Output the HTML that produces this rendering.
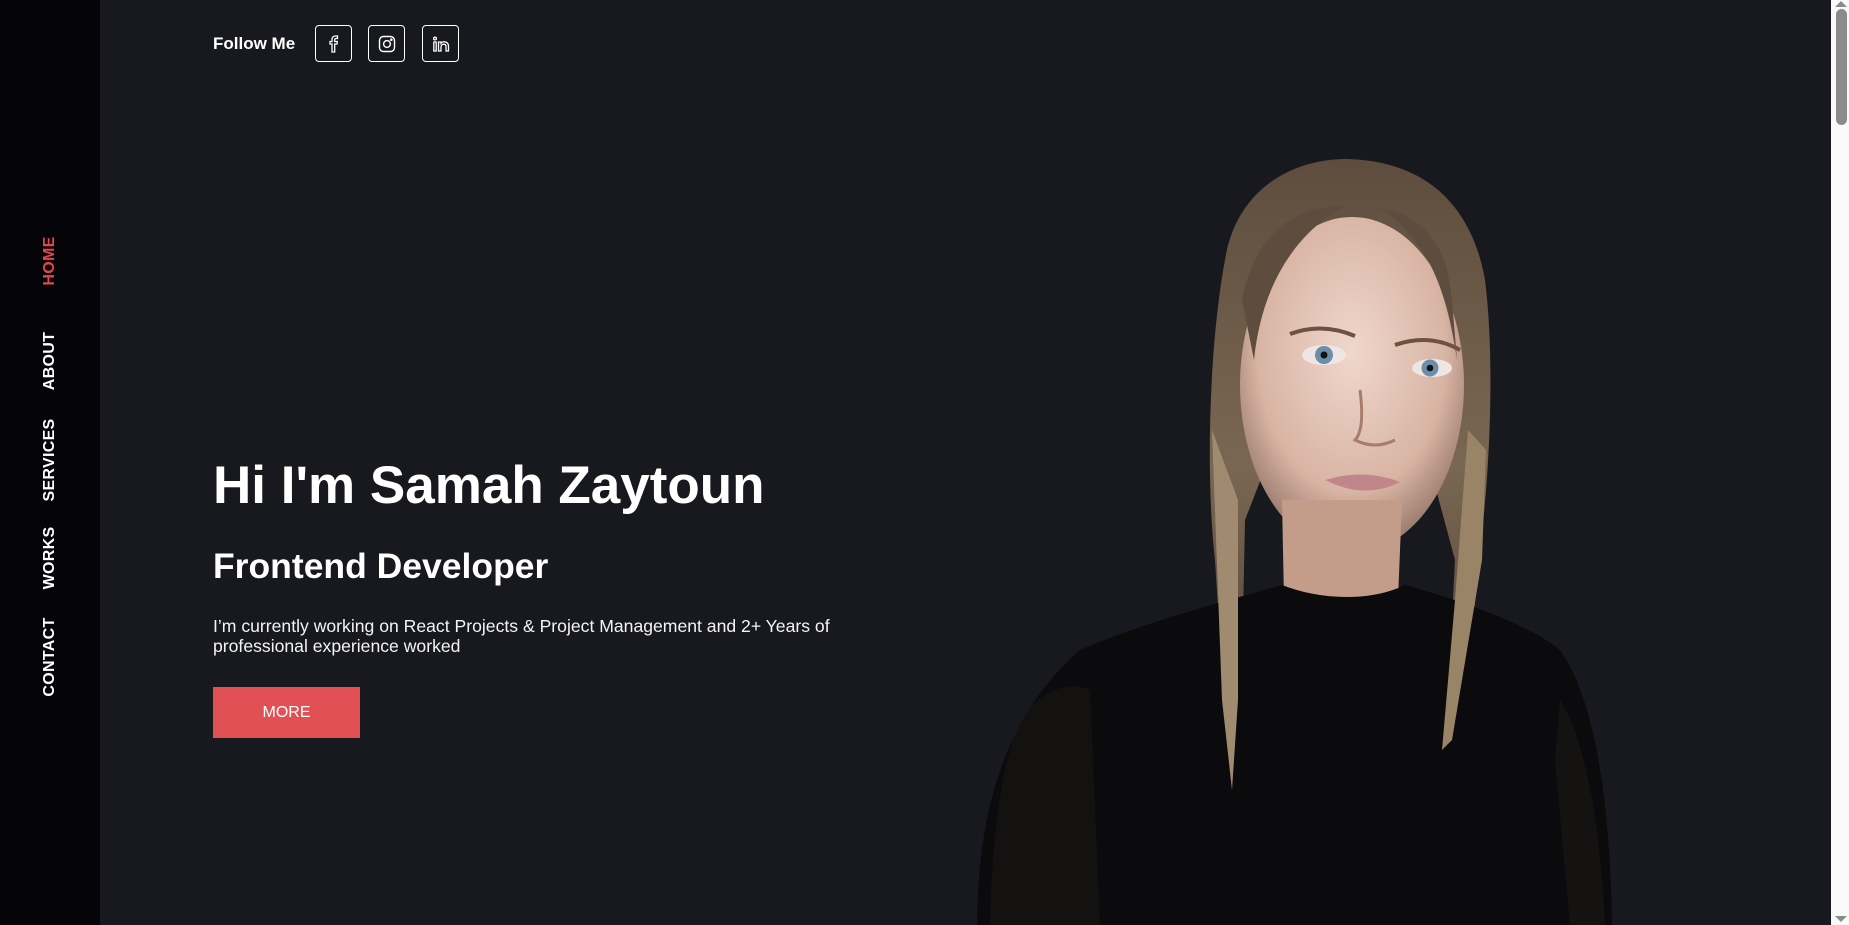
<!DOCTYPE html>
<html><head><meta charset="utf-8">
<style>
*{margin:0;padding:0;box-sizing:border-box}
html,body{width:1849px;height:925px;overflow:hidden;background:#18191e;font-family:"Liberation Sans",sans-serif;color:#fff}
.side{position:absolute;left:0;top:0;width:100px;height:925px;background:#050408}
.nav{position:absolute;left:50px;transform:translate(-50%,-50%) rotate(-90deg);font-weight:bold;font-size:16px;white-space:nowrap;letter-spacing:.3px}
.follow{position:absolute;left:213px;top:34px;font-weight:bold;font-size:17px}
.box{position:absolute;top:25px;width:37px;height:37px;border:1.3px solid #fff;border-radius:4px;display:flex;align-items:center;justify-content:center}
h1{position:absolute;left:213px;top:455px;font-size:53px;line-height:62px;white-space:nowrap}
h2{position:absolute;left:213px;top:545px;font-size:35.5px;line-height:42px;white-space:nowrap}
p{position:absolute;left:213px;top:616px;font-size:17.6px;line-height:20px;white-space:nowrap;color:#f4f4f4}
.btn{position:absolute;left:213px;top:687px;width:147px;height:51px;background:#e05055;color:#fff;font-size:16px;display:flex;align-items:center;justify-content:center}
.sb{position:absolute;left:1831px;top:0;width:18px;height:925px;background:#fafafa}
.thumb{position:absolute;left:1836px;top:9px;width:11px;height:116px;background:#8b8b8b;border-radius:6px}
</style></head><body>
<div class="side"></div>
<div class="nav" style="top:261px;color:#e0474f">HOME</div>
<div class="nav" style="top:361px">ABOUT</div>
<div class="nav" style="top:460px">SERVICES</div>
<div class="nav" style="top:558px">WORKS</div>
<div class="nav" style="top:657px">CONTACT</div>

<div class="follow">Follow Me</div>
<div class="box" style="left:315px"><svg width="16" height="18" viewBox="0 0 16 18" fill="none" stroke="#fff" stroke-width="1.3"><path d="M6 17V9H4V6.5H6V4.5C6 2.5 7.2 1 9.5 1H11.5V3.5H10C9 3.5 8.7 4 8.7 5V6.5H11.3L11 9H8.7V17Z"/></svg></div>
<div class="box" style="left:368px"><svg width="18" height="18" viewBox="0 0 18 18" fill="none" stroke="#fff" stroke-width="1.4"><rect x="1.5" y="1.5" width="15" height="15" rx="4"/><circle cx="9" cy="9" r="3.4"/><circle cx="13.3" cy="4.7" r=".6" fill="#fff"/></svg></div>
<div class="box" style="left:422px"><svg width="18" height="16" viewBox="0 0 18 16" fill="none" stroke="#fff" stroke-width="1.3"><circle cx="3" cy="2.5" r="1.4"/><path d="M1.8 6H4.2V15H1.8Z"/><path d="M6.5 15V6H9V7.3C9.8 6.2 11 5.7 12.5 5.8C15 6 16.5 7.5 16.5 10.5V15H14V10.7C14 9 13.3 8.2 12 8.2C10.5 8.2 9 9 9 11V15Z"/></svg></div>

<h1>Hi I'm Samah Zaytoun</h1>
<h2>Frontend Developer</h2>
<p>I’m currently working on React Projects &amp; Project Management and 2+ Years of<br>professional experience worked</p>
<div class="btn">MORE</div>

<svg style="position:absolute;left:960px;top:140px" width="680" height="785" viewBox="960 140 680 785">
<defs>
<radialGradient id="sk" cx="0.5" cy="0.4" r="0.6"><stop offset="0" stop-color="#f0d8cc"/><stop offset="0.7" stop-color="#d8b4a4"/><stop offset="1" stop-color="#9a7a6c"/></radialGradient>
<linearGradient id="hr" x1="0" y1="0" x2="0" y2="1"><stop offset="0" stop-color="#5e4d3e"/><stop offset="0.5" stop-color="#7a6752"/><stop offset="1" stop-color="#4a3d32"/></linearGradient>
</defs>
<path d="M1225 260C1235 195 1285 160 1345 159C1415 160 1470 195 1485 280C1495 360 1490 470 1480 550L1462 740L1445 755L1455 560L1420 430L1280 430L1245 520L1240 760L1228 770L1215 560C1205 470 1210 340 1225 260Z" fill="url(#hr)"/>
<ellipse cx="1352" cy="385" rx="112" ry="168" fill="url(#sk)"/>
<path d="M1282 500L1284 600L1398 600L1402 500Z" fill="#c49c8a"/>
<path d="M1242 300C1255 230 1300 205 1345 206C1300 230 1262 280 1254 360Z" fill="#5e4d3e"/>
<path d="M1452 300C1447 240 1420 215 1380 208C1428 240 1447 290 1457 360Z" fill="#5e4d3e"/>
<path d="M1080 650C1150 620 1230 600 1282 585C1320 600 1370 602 1405 585C1460 600 1530 625 1560 650C1595 700 1610 800 1612 925L977 925C978 820 1000 720 1080 650Z" fill="#0b0a0c"/>
<path d="M1020 720C1040 690 1070 680 1090 690L1100 925L990 925C992 840 1000 770 1020 720Z" fill="#1a1616" opacity=".6"/>
<path d="M1560 700C1585 740 1600 820 1605 925L1570 925L1555 760Z" fill="#1c1717" opacity=".6"/>
<path d="M1212 430L1222 700L1232 790L1238 700L1238 500Z" fill="#a08a70"/>
<path d="M1468 430L1455 600L1442 750L1452 740L1482 560L1486 450Z" fill="#9a8468"/>
<path d="M1290 334Q1322 322 1355 336" stroke="#6e5240" stroke-width="4" fill="none"/>
<path d="M1395 345Q1430 333 1460 350" stroke="#6e5240" stroke-width="4" fill="none"/>
<ellipse cx="1324" cy="355" rx="22" ry="10" fill="#efe6e4"/><circle cx="1324" cy="355" r="9" fill="#6d8ea8"/><circle cx="1324" cy="355" r="3.5" fill="#111"/>
<ellipse cx="1432" cy="368" rx="20" ry="9" fill="#efe6e4"/><circle cx="1430" cy="368" r="8.5" fill="#6d8ea8"/><circle cx="1430" cy="368" r="3.3" fill="#111"/>
<path d="M1360 390Q1365 430 1355 440Q1375 450 1395 440" stroke="#a87c6c" stroke-width="3" fill="none"/>
<path d="M1325 480Q1365 468 1400 482Q1365 500 1325 480Z" fill="#c0868a"/>
</svg>

<div class="sb"></div>
<div class="thumb"></div>
<svg style="position:absolute;left:1835px;top:1px" width="12" height="6"><path d="M0 6L6 0L12 6Z" fill="#8b8b8b"/></svg>
<svg style="position:absolute;left:1835px;top:916px" width="12" height="6"><path d="M0 0L6 6L12 0Z" fill="#8b8b8b"/></svg>
</body></html>
